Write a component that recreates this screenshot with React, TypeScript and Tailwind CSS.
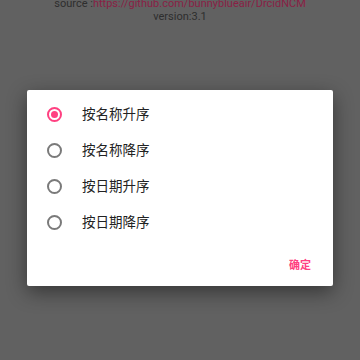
import React from "react";

const items = ["按名称升序", "按名称降序", "按日期升序", "按日期降序"];

export default function App() {
  return (
    <div
      className="w-[360px] h-[360px] bg-[#616161] overflow-hidden flex flex-col"
      style={{ fontFamily: 'Roboto, "Noto Sans CJK SC", sans-serif' }}
    >
      <div className="mt-[-3px] text-center text-[11px] leading-[13px] text-[#2e2e2e] whitespace-nowrap">
        source :<span className="text-[#8a1f45]">https://github.com/bunnyblueair/DrcidNCM</span>
      </div>
      <div className="text-center text-[11px] leading-[13px] text-[#2e2e2e]">version:3.1</div>
      <div className="pl-[27px] mt-[67px]">
        <div className="w-[306px] h-[196px] bg-white rounded-[2px] shadow-[0_6px_20px_rgba(0,0,0,0.45)] flex flex-col">
          <div className="flex flex-col pt-[6px]">
            {items.map((t, i) => (
              <div key={t} className="h-[36px] flex items-center pl-[20px]">
                <div
                  className={
                    i === 0
                      ? "w-[15px] h-[15px] rounded-full border-2 border-[#ff4081] flex items-center justify-center"
                      : "w-[15px] h-[15px] rounded-full border-2 border-[#7a7a7a]"
                  }
                >
                  {i === 0 && <div className="w-[7px] h-[7px] rounded-full bg-[#ff4081]" />}
                </div>
                <span className="ml-[20px] text-[13.5px] text-[#222222]">{t}</span>
              </div>
            ))}
          </div>
          <div className="flex justify-end pr-[22px] mt-[18px]">
            <span className="text-[11px] font-bold text-[#ff4081]">确定</span>
          </div>
        </div>
      </div>
    </div>
  );
}
